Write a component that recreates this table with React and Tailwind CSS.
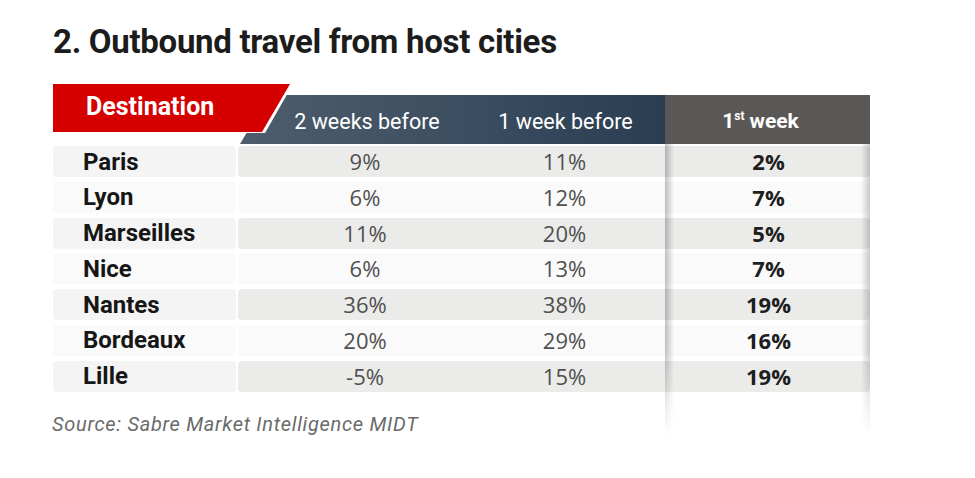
const ROWS = [
  { city: 'Paris', a: '9%', b: '11%', c: '2%' },
  { city: 'Lyon', a: '6%', b: '12%', c: '7%' },
  { city: 'Marseilles', a: '11%', b: '20%', c: '5%' },
  { city: 'Nice', a: '6%', b: '13%', c: '7%' },
  { city: 'Nantes', a: '36%', b: '38%', c: '19%' },
  { city: 'Bordeaux', a: '20%', b: '29%', c: '16%' },
  { city: 'Lille', a: '-5%', b: '15%', c: '19%' },
]

export default function App() {
  return (
    <div className="w-[975px] h-[478px] bg-white font-['Roboto',sans-serif] pl-[53px] pt-[22px]">
      <h1 className="text-[33px] leading-[40px] font-bold text-[#1c1c1c] tracking-[-0.3px]">
        2. Outbound travel from host cities
      </h1>

      <div className="relative mt-[22px] w-[817px]">
        {/* Header */}
        <div className="relative flex items-end h-[60px]">
          <div className="w-[187px] shrink-0" />
          <div className="w-[425px] h-[49px] flex items-center text-white text-[21.5px] bg-[linear-gradient(90deg,#4e5d6c_0%,#3b4d60_55%,#2a3d51_100%)] [clip-path:polygon(29px_0,100%_0,100%_100%,0_100%)]">
            <div className="w-[226px] pl-[28px] text-center pt-[5px]">2 weeks before</div>
            <div className="w-[199px] text-center pt-[5px]">1 week before</div>
          </div>
          <div className="w-[205px] h-[49px] flex items-center justify-center bg-[#5a5856] text-white text-[21px] font-bold pt-[5px] pr-[14px]">
            1<sup className="text-[12px] font-bold mr-[5px] -top-[6px]">st</sup>week
          </div>
          <div className="absolute left-0 top-0 w-[240px] h-[49px] bg-white [clip-path:polygon(0_0,100%_0,calc(100%-28px)_100%,0_100%)]" />
          <div className="absolute left-0 top-0 w-[237px] h-[48px] bg-[#d50000] [clip-path:polygon(0_0,100%_0,calc(100%-28px)_100%,0_100%)] flex items-center pl-[33px]">
            <span className="text-white font-bold text-[25px] -mt-[2px]">Destination</span>
          </div>
        </div>

        {/* Rows */}
        <div className="flex flex-col gap-[4.8px] mt-[2px]">
          {ROWS.map((r, i) => {
            const dark = i % 2 === 0
            return (
              <div key={r.city} className="flex h-[31px]">
                <div className={`w-[183px] shrink-0 rounded-[4px] flex items-center pl-[30px] text-[24px] font-bold text-[#161616] ${dark ? 'bg-[#f4f4f4]' : 'bg-[#fafafa]'}`}>
                  {r.city}
                </div>
                <div className={`ml-[2px] w-[632px] flex rounded-[4px] text-[22px] font-['Open_Sans',sans-serif] ${dark ? 'bg-[#ebecea]' : 'bg-[#fafafa]'}`}>
                  <div className="w-[226px] pl-[28px] flex items-center justify-center text-[#505050]">{r.a}</div>
                  <div className="w-[201px] flex items-center justify-center text-[#505050]">{r.b}</div>
                  <div className="w-[205px] flex items-center justify-center font-bold text-[#1e1e1e] pl-[2px]">{r.c}</div>
                </div>
              </div>
            )
          })}
        </div>

        {/* shadows on the 1st week column */}
        <div className="absolute left-[612px] top-[60px] w-[9px] h-[292px] bg-[linear-gradient(90deg,rgba(0,0,0,0.24),rgba(0,0,0,0))] [mask-image:linear-gradient(180deg,#000_0%,#000_70%,transparent_100%)]" />
        <div className="absolute left-[808px] top-[60px] w-[9px] h-[292px] bg-[linear-gradient(270deg,rgba(0,0,0,0.2),rgba(0,0,0,0))] [mask-image:linear-gradient(180deg,#000_0%,#000_70%,transparent_100%)]" />
      </div>

      <p className="mt-[17px] -ml-[1px] text-[20px] italic text-[#6b6b6b] tracking-[0.7px]">
        Source: Sabre Market Intelligence MIDT
      </p>
    </div>
  )
}
